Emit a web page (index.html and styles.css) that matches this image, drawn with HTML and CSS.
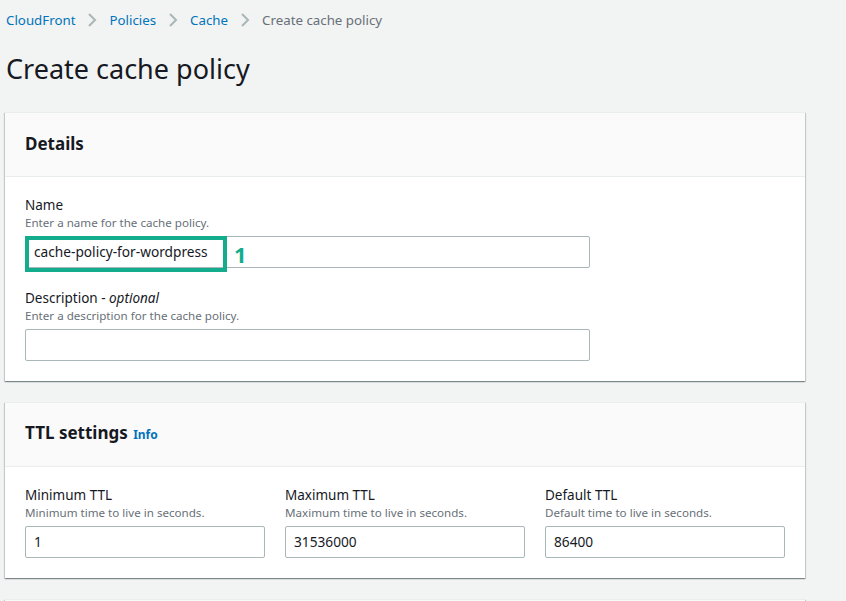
FILE: index.html
```html
<!DOCTYPE html>
<html>
<head>
<meta charset="utf-8">
<link rel="stylesheet" href="styles.css">
</head>
<body>
<div class="page">
  <nav class="crumbs">
    <a class="crumb-link">CloudFront</a>
    <svg class="chev" viewBox="0 0 10 16" width="10" height="16"><path d="M2 2l6 6-6 6" fill="none" stroke="#aab7b8" stroke-width="2"/></svg>
    <a class="crumb-link">Policies</a>
    <svg class="chev" viewBox="0 0 10 16" width="10" height="16"><path d="M2 2l6 6-6 6" fill="none" stroke="#aab7b8" stroke-width="2"/></svg>
    <a class="crumb-link">Cache</a>
    <svg class="chev" viewBox="0 0 10 16" width="10" height="16"><path d="M2 2l6 6-6 6" fill="none" stroke="#aab7b8" stroke-width="2"/></svg>
    <span class="crumb-current">Create cache policy</span>
  </nav>
  <h1 class="title">Create cache policy</h1>

  <section class="card">
    <div class="card-head"><h2>Details</h2></div>
    <div class="card-body">
      <div class="field wide">
        <div class="label">Name</div>
        <div class="hint">Enter a name for the cache policy.</div>
        <div class="input-wrap">
          <div class="input">cache-policy-for-wordpress</div>
          <div class="highlight"></div>
          <span class="marker">1</span>
        </div>
      </div>
      <div class="field wide">
        <div class="label">Description - <i>optional</i></div>
        <div class="hint">Enter a description for the cache policy.</div>
        <div class="input"></div>
      </div>
    </div>
  </section>

  <section class="card">
    <div class="card-head"><h2>TTL settings <a class="info">Info</a></h2></div>
    <div class="card-body">
      <div class="cols">
        <div class="field">
          <div class="label">Minimum TTL</div>
          <div class="hint">Minimum time to live in seconds.</div>
          <div class="input">1</div>
        </div>
        <div class="field">
          <div class="label">Maximum TTL</div>
          <div class="hint">Maximum time to live in seconds.</div>
          <div class="input">31536000</div>
        </div>
        <div class="field">
          <div class="label">Default TTL</div>
          <div class="hint">Default time to live in seconds.</div>
          <div class="input">86400</div>
        </div>
      </div>
    </div>
  </section>

  <section class="card"><div class="card-head"></div></section>
</div>
</body>
</html>
```

FILE: styles.css
```css
* { box-sizing: border-box; }
html, body { margin: 0; padding: 0; }
body {
  background: #f2f3f3;
  font-family: "Noto Sans", "Open Sans", sans-serif;
  color: #16191f;
  overflow: hidden;
  height: 601px;
}
.page {
  padding: 10px 0 0 5px;
  width: 810px;
}
.crumbs {
  display: flex;
  align-items: center;
  gap: 12px;
  height: 20px;
  font-size: 13.3px;
  padding-left: 1px;
}
.crumb-link { color: #0073bb; }
.crumb-current { color: #687078; }
.chev { display: block; }
.title {
  margin: 0;
  font-size: 27px;
  font-weight: 400;
  line-height: 34px;
  margin-top: 22px;
  margin-left: 1px;
  color: #16191f;
}
.card {
  background: #fff;
  width: 800px;
  margin-top: 26px;
  box-shadow: 0 1px 1px 0 rgba(0,28,36,.3), 1px 1px 1px 0 rgba(0,28,36,.15), -1px 1px 1px 0 rgba(0,28,36,.15);
  border-top: 1px solid #eaeded;
}
.card + .card { margin-top: 21px; }
.card-head {
  background: #fafafa;
  height: 64px;
  border-bottom: 1px solid #eaeded;
  display: flex;
  align-items: center;
  padding: 0 20px;
}
.card-head h2 {
  margin: 0;
  font-size: 17px;
  font-weight: 700;
  line-height: 22px;
  margin-top: -1px;
}
.info {
  font-size: 12px;
  color: #0073bb;
  font-weight: 700;
  margin-left: 1px;
}
.card-body {
  padding: 18px 20px 20px;
  display: flex;
  flex-direction: column;
  gap: 20px;
}
.field { display: flex; flex-direction: column; }
.field.wide { width: 565px; }
.label { font-size: 13.5px; line-height: 20px; }
.hint { font-size: 11.6px; line-height: 16px; color: #687078; margin-bottom: 5px; }
.input {
  height: 32px;
  border: 1px solid #aab7b8;
  border-radius: 2px;
  background: #fff;
  font-size: 13.7px;
  line-height: 30px;
  padding: 0 8px;
}
.input-wrap { position: relative; }
.highlight {
  position: absolute;
  left: 0;
  top: 0;
  width: 202px;
  height: 36px;
  border: 4px solid #13ad8d;
  pointer-events: none;
}
.marker {
  position: absolute;
  left: 209px;
  top: 3px;
  font-size: 22px;
  font-weight: 700;
  color: #13ad8d;
  line-height: 30px;
}
.cols {
  display: grid;
  grid-template-columns: 240px 240px 240px;
  gap: 20px;
}
```
